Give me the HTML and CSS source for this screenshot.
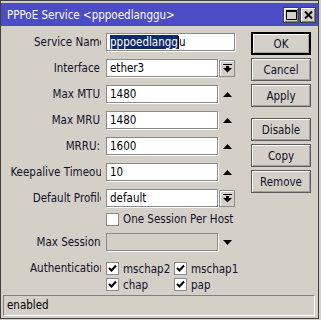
FILE: index.html
```html
<!DOCTYPE html>
<html lang="en">
<head>
    <meta charset="UTF-8">
    <title>PPPoE Service</title>
    <link rel="stylesheet" href="styles.css">
</head>
<body>
    <div class="window">
        <div class="titlebar">
            <span class="title">PPPoE Service &lt;pppoedlanggu&gt;</span>
            <div class="caption-btns">
                <div class="cap-btn">
                    <svg width="11" height="10" viewBox="0 0 11 10"><path d="M0.5 0.5h10v9h-10z" fill="none" stroke="#000"/><rect x="0" y="0" width="11" height="2" fill="#000"/></svg>
                </div>
                <div class="cap-btn">
                    <svg width="9" height="8" viewBox="0 0 9 8"><path d="M1 0.5l7 7M8 0.5l-7 7" stroke="#000" stroke-width="2"/></svg>
                </div>
            </div>
        </div>

        <div class="content">
            <div class="form">
                <div class="row">
                    <div class="label clip"><span>Service Name</span></div>
                    <div class="input wide"><span class="selected">pppoedlangg</span><span class="caret"></span>u</div>
                </div>
                <div class="row">
                    <div class="label"><span>Interface</span></div>
                    <div class="input">ether3</div>
                    <div class="drop-btn">
                        <svg width="9" height="9" viewBox="0 0 9 9"><rect x="0" y="0" width="9" height="1"/><rect x="3" y="2" width="3" height="2"/><path d="M0 4h9l-4.5 4.5z"/></svg>
                    </div>
                </div>
                <div class="row">
                    <div class="label"><span>Max MTU</span></div>
                    <div class="input">1480</div>
                    <div class="spin"><svg width="9" height="5" viewBox="0 0 9 5"><path d="M4.5 0l4.5 5h-9z"/></svg></div>
                </div>
                <div class="row">
                    <div class="label"><span>Max MRU</span></div>
                    <div class="input">1480</div>
                    <div class="spin"><svg width="9" height="5" viewBox="0 0 9 5"><path d="M4.5 0l4.5 5h-9z"/></svg></div>
                </div>
                <div class="row">
                    <div class="label"><span>MRRU:</span></div>
                    <div class="input">1600</div>
                    <div class="spin"><svg width="9" height="5" viewBox="0 0 9 5"><path d="M4.5 0l4.5 5h-9z"/></svg></div>
                </div>
                <div class="row">
                    <div class="label clip"><span>Keepalive Timeout</span></div>
                    <div class="input">10</div>
                    <div class="spin"><svg width="9" height="5" viewBox="0 0 9 5"><path d="M4.5 0l4.5 5h-9z"/></svg></div>
                </div>
                <div class="row">
                    <div class="label clip"><span>Default Profile</span></div>
                    <div class="input">default</div>
                    <div class="drop-btn">
                        <svg width="9" height="9" viewBox="0 0 9 9"><rect x="0" y="0" width="9" height="1"/><rect x="3" y="2" width="3" height="2"/><path d="M0 4h9l-4.5 4.5z"/></svg>
                    </div>
                </div>
                <div class="row row-check">
                    <div class="label"></div>
                    <div class="check-item">
                        <span class="checkbox"></span>
                        <span>One Session Per Host</span>
                    </div>
                </div>
                <div class="row row-sessions">
                    <div class="label clip"><span>Max Sessions</span></div>
                    <div class="input disabled"></div>
                    <div class="spin"><svg width="9" height="5" viewBox="0 0 9 5"><path d="M0 0h9l-4.5 5z"/></svg></div>
                </div>
                <div class="row row-auth">
                    <div class="label clip"><span>Authentication</span></div>
                    <div class="auth-grid">
                        <div class="check-item"><span class="checkbox"><svg width="11" height="11" viewBox="0 0 11 11"><path d="M2 5l2.5 2.5L9 2.5" fill="none" stroke="#000" stroke-width="2"/></svg></span><span>mschap2</span></div>
                        <div class="check-item"><span class="checkbox"><svg width="11" height="11" viewBox="0 0 11 11"><path d="M2 5l2.5 2.5L9 2.5" fill="none" stroke="#000" stroke-width="2"/></svg></span><span>mschap1</span></div>
                        <div class="check-item"><span class="checkbox"><svg width="11" height="11" viewBox="0 0 11 11"><path d="M2 5l2.5 2.5L9 2.5" fill="none" stroke="#000" stroke-width="2"/></svg></span><span>chap</span></div>
                        <div class="check-item"><span class="checkbox"><svg width="11" height="11" viewBox="0 0 11 11"><path d="M2 5l2.5 2.5L9 2.5" fill="none" stroke="#000" stroke-width="2"/></svg></span><span>pap</span></div>
                    </div>
                </div>
            </div>

            <div class="actions">
                <div class="btn default">OK</div>
                <div class="btn">Cancel</div>
                <div class="btn gap-after">Apply</div>
                <div class="btn">Disable</div>
                <div class="btn">Copy</div>
                <div class="btn">Remove</div>
            </div>
        </div>

        <div class="statusbar">enabled</div>
    </div>
</body>
</html>
```

FILE: styles.css
```css
:root {
    --face: #d4d0c8;
    --shadow: #808080;
    --dark: #404040;
    --caption: #4c4cc6;
    --text: #10102a;
}

* {
    margin: 0;
    padding: 0;
    box-sizing: border-box;
}

body {
    background: var(--face);
    font-family: "DejaVu Sans Condensed", "DejaVu Sans", sans-serif;
    font-size: 11.5px;
    color: var(--text);
}

.window {
    width: 319px;
    height: 319px;
    border: 1px solid var(--dark);
    padding-top: 2px;
    background: var(--face);
    display: flex;
    flex-direction: column;
}

.titlebar {
    height: 23px;
    background: var(--caption);
    color: #fff;
    display: flex;
    align-items: center;
    padding-left: 6px;
}

.caption-btns {
    margin-left: auto;
    margin-right: 2px;
    display: flex;
    gap: 1px;
}

.cap-btn {
    width: 16px;
    height: 16px;
    background: var(--face);
    border: 1px solid var(--dark);
    box-shadow: inset 1px 1px 0 #fff, inset -1px -1px 0 var(--shadow);
    display: flex;
    align-items: center;
    justify-content: center;
}

.content {
    flex: 1;
    display: flex;
    padding: 7px 0 0 3px;
}

.form {
    width: 232px;
    display: flex;
    flex-direction: column;
}

.row {
    display: flex;
    align-items: center;
    height: 18px;
    margin-top: 8px;
}

    .row:first-child {
        margin-top: 0;
    }

.label {
    width: 97px;
    margin-right: 5px;
    flex-shrink: 0;
    overflow: hidden;
    white-space: nowrap;
}

    .label span {
        display: block;
        text-align: right;
        margin-right: 1px;
    }

    /* long captions run past the column and get cut */
    .label.clip span {
        margin-right: -5px;
    }

.input {
    width: 112px;
    height: 18px;
    background: #fff;
    border: 1px solid #8a8a8a;
    box-shadow: 1px 1px 0 #fff;
    color: #000;
    padding-left: 3px;
    line-height: 16px;
    white-space: nowrap;
    overflow: hidden;
}

    .input.wide {
        width: 129px;
    }

    .input.disabled {
        background: var(--face);
    }

.selected {
    background: #0f2a6b;
    color: #fff;
}

.caret {
    display: inline-block;
    width: 1px;
    height: 13px;
    background: #000;
    vertical-align: -3px;
}

.drop-btn {
    width: 16px;
    height: 17px;
    margin-left: 1px;
    background: var(--face);
    border: 1px solid #8a8a8a;
    box-shadow: inset 1px 1px 0 #fff;
    display: flex;
    align-items: center;
    justify-content: center;
}

.spin {
    width: 17px;
    margin-left: 1px;
    display: flex;
    justify-content: center;
}

.row-check {
    height: 14px;
    margin-top: 5px;
}

.row-sessions {
    margin-top: 7px;
}

.row-auth {
    height: auto;
    align-items: flex-start;
    margin-top: 10px;
}

    .row-auth .label {
        line-height: 15px;
    }

.auth-grid {
    display: grid;
    grid-template-columns: 68px auto;
    row-gap: 1px;
}

.check-item {
    display: flex;
    align-items: center;
    gap: 4px;
    height: 15px;
    white-space: nowrap;
}

.checkbox {
    width: 13px;
    height: 13px;
    background: #fff;
    border: 1px solid #8a8a8a;
    display: flex;
    align-items: center;
    justify-content: center;
}

.actions {
    width: 60px;
    margin-left: 15px;
    margin-top: -1px;
    display: flex;
    flex-direction: column;
}

.btn {
    height: 23px;
    margin-bottom: 3px;
    border: 1px solid #5a5a5a;
    box-shadow: inset 1px 1px 0 #fff, inset -1px -1px 0 #a0a0a0;
    display: flex;
    align-items: center;
    justify-content: center;
}

    .btn.default {
        border: 2px solid #000;
    }

    .btn.gap-after {
        margin-bottom: 11px;
    }

.statusbar {
    height: 21px;
    margin: 0 3px 2px 2px;
    border: 1px solid;
    border-color: var(--shadow) #fff #fff var(--shadow);
    padding-left: 3px;
    line-height: 19px;
    color: #000;
}
```
